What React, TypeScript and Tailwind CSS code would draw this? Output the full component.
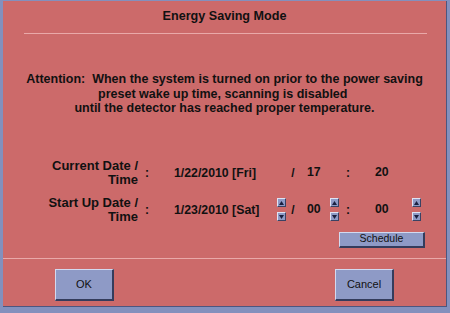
import React from "react";

const font = { fontFamily: '"Liberation Sans", Arial, Helvetica, sans-serif' };

function Spin({ hidden }: { hidden?: boolean }) {
  return (
    <div className={`flex flex-col gap-[5px] w-[9px] ${hidden ? "invisible" : ""}`}>
      <div className="w-[9px] h-[9px] bg-[#8e9ac6] border-t border-l border-[#dfe4f4] border-r border-b border-r-[#3a4263] border-b-[#3a4263] flex items-center justify-center">
        <svg width="5" height="4" viewBox="0 0 5 4"><path d="M2.5 0 L5 4 L0 4 Z" fill="#1a2040" /></svg>
      </div>
      <div className="w-[9px] h-[9px] bg-[#8e9ac6] border-t border-l border-[#dfe4f4] border-r border-b border-r-[#3a4263] border-b-[#3a4263] flex items-center justify-center">
        <svg width="5" height="4" viewBox="0 0 5 4"><path d="M0 0 L5 0 L2.5 4 Z" fill="#1a2040" /></svg>
      </div>
    </div>
  );
}

function Row({ l1, l2, date, v1, v2, spin }: { l1: string; l2: string; date: string; v1: string; v2: string; spin: boolean }) {
  return (
    <div className="flex items-center h-[28px] text-[#111]">
      <div className="w-[135px] text-right text-[13px] leading-[14px] font-bold">
        <div>{l1}</div>
        <div>{l2}</div>
      </div>
      <div className="w-[18px] text-center text-[12px] font-bold">:</div>
      <div className="ml-[18px] w-[103px] text-[12.3px] leading-[14px] font-bold">{date}</div>
      <Spin hidden={!spin} />
      <div className="w-[14px] text-center text-[12px] font-bold">/</div>
      <div className="w-[30px] pl-[7px] text-[12.3px] font-bold">{v1}</div>
      <Spin hidden={!spin} />
      <div className="w-[18px] text-center text-[12px] font-bold">:</div>
      <div className="w-[55px] pl-[18px] text-[12.3px] font-bold">{v2}</div>
      <Spin hidden={!spin} />
    </div>
  );
}

function Btn({ children, className }: { children: React.ReactNode; className?: string }) {
  return (
    <div className={`bg-[#8e9ac6] border-t border-l border-[#d3daf0] border-r-2 border-b-2 border-r-[#343c5c] border-b-[#343c5c] flex items-center justify-center text-[#111] ${className ?? ""}`}>
      {children}
    </div>
  );
}

export default function App() {
  return (
    <div style={font} className="w-[450px] h-[313px] bg-[#8390bd] pt-[1px] pl-[3px] pr-[3px] pb-[6px]">
      <div className="w-full h-full bg-[#cc6a6a] border-r border-b border-[#4c5680] flex flex-col">
        <div className="pt-[8px] h-[22px] text-center text-[12.6px] leading-[14px] font-bold text-[#111]">Energy Saving Mode</div>
        <div className="mt-[10px] ml-[21px] mr-[19px] h-px bg-[#e9a9a9]" />
        <div className="mt-[38px] text-center text-[12.5px] leading-[14.5px] font-bold text-[#111]">
          <div>Attention:&nbsp; When the system is turned on prior to the power saving</div>
          <div>preset wake up time, scanning is disabled&nbsp;</div>
          <div>until the detector has reached proper temperature.</div>
        </div>
        <div className="mt-[43px] flex flex-col gap-[9px]">
          <Row l1="Current Date /" l2="Time" date="1/22/2010 [Fri]" v1="17" v2="20" spin={false} />
          <Row l1="Start Up Date /" l2="Time" date="1/23/2010 [Sat]" v1="00" v2="00" spin={true} />
        </div>
        <div className="mt-[8px] flex justify-end pr-[21px]">
          <Btn className="w-[86px] h-[16px] text-[10.5px]">Schedule</Btn>
        </div>
        <div className="mt-[10px] h-px bg-[#e9a9a9]" />
        <div className="mt-[10px] flex">
          <Btn className="ml-[52px] w-[59px] h-[32px] text-[11px]">OK</Btn>
          <Btn className="ml-[221px] w-[59px] h-[32px] text-[11px]">Cancel</Btn>
        </div>
      </div>
    </div>
  );
}
